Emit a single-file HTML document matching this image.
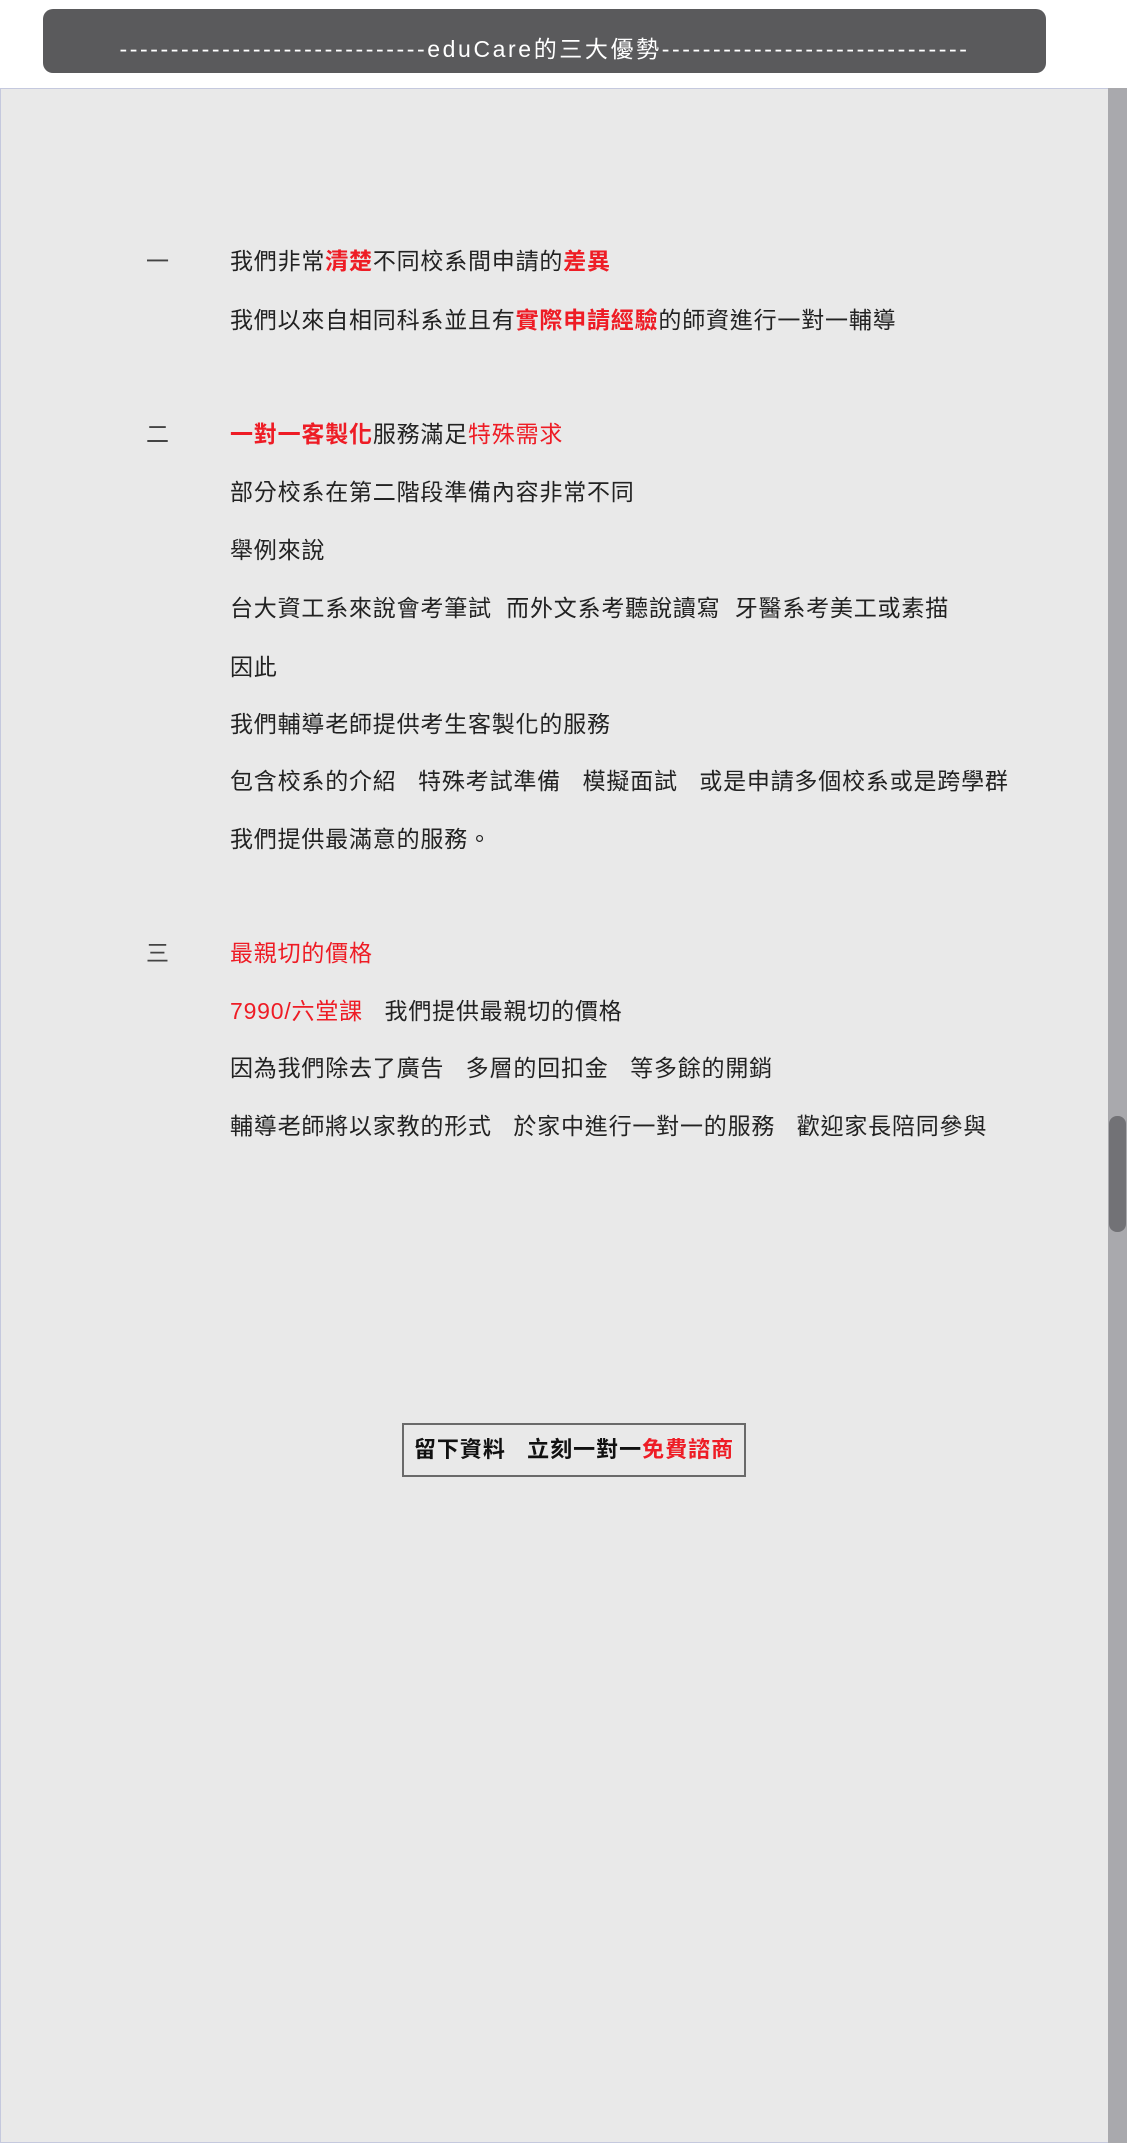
<!DOCTYPE html>
<html><head><meta charset="utf-8"><style>
*{margin:0;padding:0;box-sizing:border-box}
body{width:1127px;height:2143px;background:#fff;position:relative;overflow:hidden;font-family:"Liberation Sans","Noto Sans CJK TC",sans-serif}
.hdr{position:absolute;left:43px;top:9px;width:1003px;height:64px;background:#5a5a5c;border-radius:10px;color:#fff;font-size:23px;letter-spacing:2.6px;text-align:center;line-height:80px;white-space:nowrap;overflow:hidden}
.main{position:absolute;left:0;top:88px;width:1108px;height:2055px;background:#e9e9e9;border:1px solid #c5c9de;border-right:none}
.sb{position:absolute;left:1108px;top:88px;width:19px;height:2055px;background:#a9a9ad}
.th{position:absolute;left:1109px;top:1116px;width:17px;height:116px;background:#727276;border-radius:8px}
.l{position:absolute;left:230px;font-size:23px;letter-spacing:0.8px;color:#222;white-space:nowrap;line-height:30px}
.n{position:absolute;left:146px;font-size:23px;color:#444;line-height:30px}
.r{color:#ee1c25}.b{font-weight:bold}
.btn{position:absolute;left:402px;top:1423px;width:344px;height:54px;border:2px solid #6a6a6a;font-size:22px;font-weight:bold;line-height:50px;text-align:center;color:#111;white-space:nowrap;letter-spacing:1px}
</style></head><body>
<div class="hdr">------------------------------eduCare的三大優勢------------------------------</div>
<div class="main"></div>
<div class="sb"></div><div class="th"></div>
<div class="n" style="top:246px">一</div>
<div class="l" style="top:246px">我們非常<span class="r b">清楚</span>不同校系間申請的<span class="r b">差異</span></div>
<div class="l" style="top:305px">我們以來自相同科系並且有<span class="r b">實際申請經驗</span>的師資進行一對一輔導</div>
<div class="n" style="top:419px">二</div>
<div class="l" style="top:419px"><span class="r b">一對一客製化</span>服務滿足<span class="r">特殊需求</span></div>
<div class="l" style="top:477px">部分校系在第二階段準備內容非常不同</div>
<div class="l" style="top:535px">舉例來說</div>
<div class="l" style="top:593px">台大資工系來說會考筆試&nbsp;&nbsp;而外文系考聽說讀寫&nbsp;&nbsp;牙醫系考美工或素描</div>
<div class="l" style="top:652px">因此</div>
<div class="l" style="top:709px">我們輔導老師提供考生客製化的服務</div>
<div class="l" style="top:766px">包含校系的介紹&nbsp;&nbsp;&nbsp;特殊考試準備&nbsp;&nbsp;&nbsp;模擬面試&nbsp;&nbsp;&nbsp;或是申請多個校系或是跨學群</div>
<div class="l" style="top:824px">我們提供最滿意的服務。</div>
<div class="n" style="top:938px">三</div>
<div class="l r" style="top:938px">最親切的價格</div>
<div class="l" style="top:996px"><span class="r">7990/六堂課</span>&nbsp;&nbsp;&nbsp;我們提供最親切的價格</div>
<div class="l" style="top:1053px">因為我們除去了廣告&nbsp;&nbsp;&nbsp;多層的回扣金&nbsp;&nbsp;&nbsp;等多餘的開銷</div>
<div class="l" style="top:1111px">輔導老師將以家教的形式&nbsp;&nbsp;&nbsp;於家中進行一對一的服務&nbsp;&nbsp;&nbsp;歡迎家長陪同參與</div>
<div class="btn">留下資料&nbsp;&nbsp;&nbsp;立刻一對一<span class="r">免費諮商</span></div>
</body></html>
